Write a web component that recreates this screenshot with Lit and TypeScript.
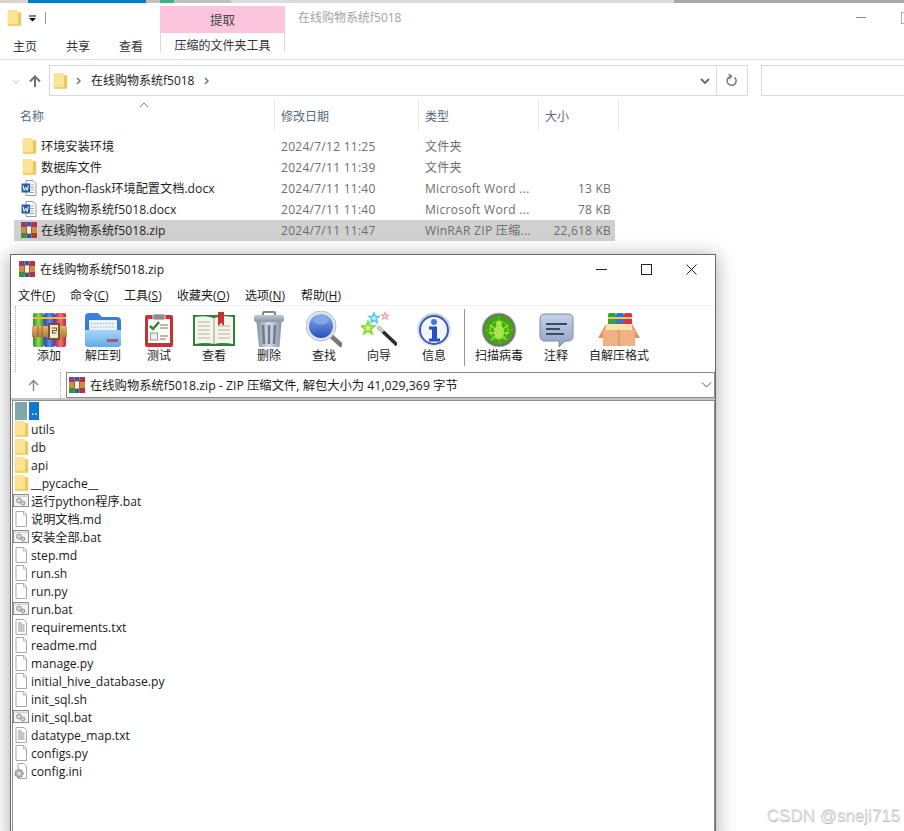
import { LitElement, html, css, svg } from "lit";
import { customElement } from "lit/decorators.js";

// small file-type icons, 16x16 viewBox
const folderIcon = html`<svg width="16" height="16" viewBox="0 0 16 16">
  <path d="M2 .5h9l1 2h3v13H2z" fill="#fde392" stroke="#ecd282" stroke-width=".5"/>
  <path d="M12 2.500h3v13H2v-1.200h10z" fill="#efc75e"/>
</svg>`;

const wordIcon = html`<svg width="16" height="16" viewBox="0 0 16 16">
  <path d="M5 .5h7l3 3v12H5z" fill="#fff" stroke="#8d9bb0"/>
  <path d="M9 5h4M9 7.500h4M9 10h4M9 12.500h4" stroke="#9aa7ba"/>
  <rect x="0.500" y="3.500" width="8.500" height="9" fill="#2a5ca8"/>
  <path d="M2 5.500l1.200 5 1.500-3.500 1.500 3.500 1.200-5" fill="none" stroke="#fff"/>
</svg>`;

const rarIcon = html`<svg width="16" height="16" viewBox="0 0 16 16">
  <rect x="0" y="0" width="5.500" height="6" fill="#9b3a78"/>
  <rect x="5.500" y="0" width="5" height="6" fill="#3b56b0"/>
  <rect x="10.500" y="0" width="5.500" height="6" fill="#c22a4d"/>
  <rect x="0" y="10" width="5.500" height="6" fill="#3f8f3c"/>
  <rect x="5.500" y="10" width="5" height="6" fill="#2f5f9a"/>
  <rect x="10.500" y="10" width="5.500" height="6" fill="#b7333c"/>
  <rect x="0" y="5" width="16" height="6" fill="#c98f45"/>
  <rect x="5.500" y="4" width="5" height="8" fill="#f6f0e2" stroke="#7a5326" stroke-width=".8"/>
</svg>`;

const pageIcon = html`<svg width="16" height="16" viewBox="0 0 16 16">
  <path d="M3 .5h8l2.500 3v12H3z" fill="#fff" stroke="#a8a8a8"/>
  <path d="M10.500 .5v3.500h3" fill="#f2f2f2" stroke="#b8b8b8"/>
</svg>`;

const textIcon = html`<svg width="16" height="16" viewBox="0 0 16 16">
  <path d="M3 .5h8l2.500 3v12H3z" fill="#fff" stroke="#a8a8a8"/>
  <path d="M5 4h4M5 6h6.500M5 8h6.500M5 10h6.500M5 12h6.500" stroke="#8c8c8c"/>
</svg>`;

const batIcon = html`<svg width="16" height="16" viewBox="0 0 16 16">
  <rect x="0.500" y="1.500" width="15" height="12" fill="#f4f4f4" stroke="#8c8c8c"/>
  <rect x="1.500" y="2.500" width="13" height="1.500" fill="#cfd3d8"/>
  <circle cx="6" cy="7.500" r="2.500" fill="#d5d5d5" stroke="#8a8a8a" stroke-width=".9"/>
  <circle cx="10" cy="10" r="2" fill="#d5d5d5" stroke="#8a8a8a" stroke-width=".9"/>
</svg>`;

const iniIcon = html`<svg width="16" height="16" viewBox="0 0 16 16">
  <path d="M5 .5h6l2.500 3v12H5z" fill="#fff" stroke="#a8a8a8"/>
  <circle cx="6" cy="10.500" r="3.800" fill="#bdbdbd" stroke="#7d7d7d" stroke-dasharray="1.400 .8" stroke-width="1.400"/>
  <circle cx="6" cy="10.500" r="1.300" fill="#eee"/>
</svg>`;

const parentIcon = html`<svg width="16" height="18" viewBox="0 0 16 18"><rect x="2" y="0" width="12" height="18" fill="#7ea8ad"/></svg>`;

const STAR = "M0-1L.28-.34 1-.3.44.14.62.85 0 .46-.62.85-.44.14-1-.3-.28-.34z";

// three-stop horizontal gradient, used for the book spines and other round shapes
const hGrad = (id: string, a: string, b: string) => svg`
  <linearGradient id=${id}><stop offset="0" stop-color=${a}/><stop offset=".5" stop-color=${b}/><stop offset="1" stop-color=${a}/></linearGradient>`;
const vGrad = (id: string, a: string, b: string) => svg`
  <linearGradient id=${id} x2="0" y2="1"><stop offset="0" stop-color=${a}/><stop offset="1" stop-color=${b}/></linearGradient>`;

// toolbar artwork, 36px tall
const toolbarArt: Record<string, unknown> = {
  add: svg`
    <defs>${hGrad("bg", "#2c8f2c", "#8fd65a")}${hGrad("bb", "#2b45b0", "#5f8ae8")}${hGrad("br", "#c32443", "#f0707f")}${vGrad("st", "#e3b56a", "#b07c38")}</defs>
    <rect x="2" y="2" width="11" height="34" rx="2" fill="url(#bg)"/>
    <rect x="13" y="2" width="11" height="34" rx="2" fill="url(#bb)"/>
    <rect x="24" y="2" width="11" height="34" rx="2" fill="url(#br)"/>
    <path d="M2 7h33" stroke="#e2bd4c" stroke-width="2"/>
    <rect x="1" y="15" width="35" height="11" fill="url(#st)"/>
    <path d="M7 15v11M11 15v11" stroke="#8f6427"/>
    <rect x="18" y="13" width="10" height="15" fill="#f6eedb" stroke="#7a5326" stroke-width="2"/>
    <path d="M20.500 17h5v2.500h-4v2.500h4" fill="none" stroke="#7a5326" stroke-width="1.200"/>`,
  extract: svg`
    <defs>${vGrad("fb", "#3a84dc", "#2f6fc8")}${vGrad("ff", "#a9d6f8", "#62aaec")}</defs>
    <path d="M0 6q0-4 4-4h9l4 4h15q4 0 4 4v22q0 4-4 4H4q-4 0-4-4z" fill="url(#fb)"/>
    <path d="M4 9h28v12H4z" fill="#eaf2fb"/>
    <path d="M6 12.500h24M6 16h24" stroke="#9db6d4" stroke-dasharray="1.500 1.500"/>
    <path d="M0 19h36v13q0 4-4 4H4q-4 0-4-4z" fill="url(#ff)"/>
    <rect x="22" y="28" width="11" height="3" fill="#cf4f48"/>`,
  test: svg`
    <rect x="4" y="4" width="28" height="32" rx="2" fill="#c23434"/>
    <rect x="7" y="8" width="22" height="24" fill="#fbfbf6"/>
    <rect x="12" y="3" width="12" height="6" rx="1.500" fill="#8d8d8d" stroke="#e8e8e8"/>
    <path d="M9 15l3 3 6-7" fill="none" stroke="#2e8a32" stroke-width="2.500"/>
    <path d="M19 14h8M19 17h8M19 25h8M19 28h6" stroke="#777"/>
    <rect x="9.500" y="22" width="7" height="7" fill="#eee" stroke="#999"/>`,
  view: svg`
    <rect x="0" y="4" width="42" height="31" fill="#2e7f3c"/>
    <path d="M2 6q11-2 19 1q8-3 19-1v27q-11-2-19 0q-8-2-19 0z" fill="#f7f5ea"/>
    <path d="M21 7v26" stroke="#999"/>
    <path d="M5 11h12M5 15h12M5 19h12M5 23h12M5 27h12M25 15h12M25 19h12M25 23h12M25 27h12" stroke="#b5b5ab"/>
    <path d="M25 1h6v14l-3-3-3 3z" fill="#c3342f"/>`,
  delete: svg`
    <defs>${hGrad("tc", "#8492a3", "#d8dfe8")}${vGrad("tl", "#c2ccd8", "#8794a5")}</defs>
    <rect x="12" y="1" width="12" height="5" rx="1" fill="none" stroke="#7c8794" stroke-width="2"/>
    <rect x="3" y="4" width="30" height="7" rx="2" fill="url(#tl)"/>
    <path d="M5.500 11h25l-2 25H8z" fill="url(#tc)"/>
    <path d="M12 14l1 19M18 14v19M24 14l-1 19" stroke="#6f7c8c" stroke-width="2.500"/>`,
  find: svg`
    <defs>${vGrad("lens", "#8eaeea", "#2450b8")}</defs>
    <path d="M25 25l10 9" stroke="#7a7a7a" stroke-width="4.500" stroke-linecap="round"/>
    <circle cx="15" cy="15" r="15" fill="#dfe6ee" stroke="#b5bfca"/>
    <circle cx="15" cy="15" r="12" fill="url(#lens)"/>
    <ellipse cx="15" cy="9.500" rx="7.500" ry="4" fill="#86a8e8"/>`,
  wizard: svg`
    <path d="M17 16l19 18" stroke="#2c2c2c" stroke-width="3.500"/>
    <path d="M17 16l5 4.700" stroke="#cfcfcf" stroke-width="3.500"/>
    <path d=${STAR} transform="translate(7 17) scale(6.500)" fill="#d5f5a0" stroke="#8ddc3c" stroke-width=".3"/>
    <path d=${STAR} transform="translate(13 7) scale(5)" fill="#c8f2fa" stroke="#45cde8" stroke-width=".3"/>
    <path d=${STAR} transform="translate(24 5) scale(3.500)" fill="#fbdcde" stroke="#ef9aa0" stroke-width=".3"/>`,
  info: svg`
    <defs>${vGrad("ib", "#c8ced9", "#eef1f6")}</defs>
    <circle cx="18" cy="19" r="17" fill="url(#ib)"/>
    <circle cx="18" cy="19" r="14" fill="#f2f5fb" stroke="#3c58c0" stroke-width="2"/>
    <circle cx="18" cy="11" r="3" fill="#3c7ad8"/>
    <path d="M13 15.500h8v12h3v3H13v-3h3v-9h-3z" fill="#2b4fc0"/>`,
  scan: svg`
    <circle cx="18" cy="19" r="17" fill="#6d7470" stroke="#c2c8c4"/>
    <circle cx="18" cy="19" r="14.500" fill="#43a80e"/>
    <circle cx="18" cy="19" r="9" fill="none" stroke="#8ade3e"/>
    <path d="M18 5v28M4 19h28" stroke="#7acb32" stroke-width=".7"/>
    <ellipse cx="18" cy="21" rx="5" ry="7" fill="#a5e84e"/>
    <circle cx="18" cy="13" r="3" fill="#a5e84e"/>
    <path d="M9 14l5 4M27 14l-5 4M8 22h6M28 22h-6M10 29l5-4M26 29l-5-4" stroke="#a5e84e" stroke-width="1.300"/>`,
  comment: svg`
    <defs>${vGrad("cm", "#c6d2e6", "#8ea2c4")}</defs>
    <path d="M7 3h23q5 0 5 5v17q0 5-5 5h-3l-6 6v-6H7q-5 0-5-5V8q0-5 5-5z" fill="url(#cm)" stroke="#7a8ba8"/>
    <path d="M8 13h21M8 18h14M8 23h18" stroke="#3c4a60" stroke-width="2"/>`,
  sfx: svg`
    <rect x="10" y="2" width="8" height="15" rx="1.500" fill="#2fa544"/>
    <rect x="18" y="2" width="8" height="15" rx="1.500" fill="#3a6fd0"/>
    <rect x="26" y="2" width="8" height="15" rx="1.500" fill="#dd2f4e"/>
    <path d="M10 7h24" stroke="#e4cf66" stroke-width="2"/>
    <path d="M8 13h27v2l-5 8H8z" fill="#f9e3ab"/>
    <path d="M8 13L0 27h7zM34 13l8 14h-7z" fill="#dd9364"/>
    <rect x="5" y="19" width="32" height="16" fill="#f2b183"/>
    <path d="M21 19v16" stroke="#c98a5e"/>`,
};

const art = (key: string, width = 36) =>
  html`<svg width=${width} height="36" viewBox="0 0 ${width} 36">${toolbarArt[key]}</svg>`;

const explorerRows = [
  { icon: folderIcon, name: "环境安装环境", date: "2024/7/12 11:25", type: "文件夹", size: "" },
  { icon: folderIcon, name: "数据库文件", date: "2024/7/11 11:39", type: "文件夹", size: "" },
  { icon: wordIcon, name: "python-flask环境配置文档.docx", date: "2024/7/11 11:40", type: "Microsoft Word ...", size: "13 KB" },
  { icon: wordIcon, name: "在线购物系统f5018.docx", date: "2024/7/11 11:40", type: "Microsoft Word ...", size: "78 KB" },
  { icon: rarIcon, name: "在线购物系统f5018.zip", date: "2024/7/11 11:47", type: "WinRAR ZIP 压缩...", size: "22,618 KB", selected: true },
];

const tools = [
  { key: "add", label: "添加", w: 54 },
  { key: "extract", label: "解压到", w: 54 },
  { key: "test", label: "测试", w: 58 },
  { key: "view", label: "查看", w: 52, art: 42 },
  { key: "delete", label: "删除", w: 58 },
  { key: "find", label: "查找", w: 52 },
  { key: "wizard", label: "向导", w: 58 },
  { key: "info", label: "信息", w: 52 },
];

const tools2 = [
  { key: "scan", label: "扫描病毒", w: 54 },
  { key: "comment", label: "注释", w: 60 },
  { key: "sfx", label: "自解压格式", w: 66, art: 42 },
];

const menu = [
  ["文件(", "F", ")"],
  ["命令(", "C", ")"],
  ["工具(", "S", ")"],
  ["收藏夹(", "O", ")"],
  ["选项(", "N", ")"],
  ["帮助(", "H", ")"],
];

const archiveRows: [unknown, string][] = [
  [folderIcon, "utils"],
  [folderIcon, "db"],
  [folderIcon, "api"],
  [folderIcon, "__pycache__"],
  [batIcon, "运行python程序.bat"],
  [pageIcon, "说明文档.md"],
  [batIcon, "安装全部.bat"],
  [pageIcon, "step.md"],
  [pageIcon, "run.sh"],
  [pageIcon, "run.py"],
  [batIcon, "run.bat"],
  [textIcon, "requirements.txt"],
  [pageIcon, "readme.md"],
  [pageIcon, "manage.py"],
  [pageIcon, "initial_hive_database.py"],
  [pageIcon, "init_sql.sh"],
  [batIcon, "init_sql.bat"],
  [textIcon, "datatype_map.txt"],
  [pageIcon, "configs.py"],
  [iniIcon, "config.ini"],
];

@customElement("app-root")
export class AppRoot extends LitElement {
  static styles = css`
    :host {
      display: block;
      position: relative;
      width: 904px;
      height: 831px;
      overflow: hidden;
      background: #fff;
      color: #1a1a1a;
      font-family: "Open Sans", "Noto Sans CJK SC", sans-serif;
      font-size: 12px;
    }

    svg {
      display: block;
      flex: none;
    }

    /* desktop strip above the explorer */
    .strip {
      display: flex;
      height: 3px;
    }
    .strip span {
      display: block;
    }
    .s1 { width: 28px; background: #d8d4cc; }
    .s2 { width: 118px; background: #0b78c2; }
    .s3 { width: 14px; background: #c4c0bc; }
    .s3b { width: 14px; background: #3fb27f; }
    .s3c { width: 57px; background: #c4c0bc; }
    .s4 { width: 443px; background: #dcdcdc; }
    .s5 { flex: 1; background: #a8a8a8; }

    .title-bar {
      display: flex;
      height: 30px;
      align-items: flex-end;
    }
    .quick {
      display: flex;
      align-items: center;
      width: 160px;
      height: 30px;
      padding-left: 6px;
      box-sizing: border-box;
    }
    .dropdown {
      margin-left: 7px;
      width: 7px;
      height: 7px;
    }
    .bar-line {
      margin-left: 9px;
      width: 1px;
      height: 12px;
      background: #999;
    }
    .pink {
      width: 125px;
      height: 27px;
      background: #fdc5dd;
      display: flex;
      align-items: center;
      justify-content: center;
      font-size: 12.500px;
      color: #444;
    }
    .win-title {
      margin-left: 13px;
      height: 30px;
      line-height: 29px;
      color: #a3a3a3;
    }
    .win-min {
      position: absolute;
      left: 856px;
      top: 17px;
      width: 10px;
      height: 1px;
      background: #888;
    }
    .win-max {
      position: absolute;
      left: 901px;
      top: 12px;
      width: 10px;
      height: 10px;
      border: 1px solid #aaa;
    }

    .tabs {
      display: flex;
      height: 26px;
      border-bottom: 1px solid #dedede;
      align-items: center;
    }
    .tab {
      width: 53px;
      padding-left: 13px;
      box-sizing: border-box;
      color: #333;
    }
    .tab:nth-child(3) { width: 54px; margin-right: -13px; }
    .tool-tab {
      width: 125px;
      height: 19px;
      align-self: flex-start;
      margin-left: 13px;
      border: 1px solid #d9d9d9;
      border-width: 0 1px;
      box-sizing: border-box;
      text-align: center;
      line-height: 25px;
      color: #333;
    }

    .nav {
      display: flex;
      align-items: center;
      height: 31px;
      margin-top: 5px;
    }
    .nav-buttons {
      width: 49px;
      display: flex;
      align-items: center;
      padding-left: 11px;
      gap: 8px;
      box-sizing: border-box;
    }
    .address {
      width: 699px;
      height: 31px;
      box-sizing: border-box;
      border: 1px solid #d9d9d9;
      display: flex;
      align-items: center;
      padding-left: 2px;
      gap: 6px;
    }
    .address .path {
      margin: 0 2px 2px 1px;
    }
    .address .grow { flex: 1; }
    .address .refresh {
      width: 30px;
      height: 29px;
      border-left: 1px solid #d9d9d9;
      display: flex;
      align-items: center;
      justify-content: center;
    }
    .search {
      margin-left: 13px;
      flex: 1;
      height: 31px;
      box-sizing: border-box;
      border: 1px solid #d9d9d9;
      border-right: 0;
    }

    .columns {
      position: relative;
      display: grid;
      grid-template-columns: 275px 144px 120px 80px;
      height: 30px;
      margin-top: 4px;
      color: #566a80;
    }
    .columns > div {
      display: flex;
      align-items: center;
      padding: 2px 0 0 6px;
      border-right: 1px solid #e5e5e5;
    }
    .columns > div:first-child { padding-left: 20px; }
    .sort {
      position: absolute;
      left: 139px;
      top: 2px;
    }

    .rows {
      margin: 6px 0 0 14px;
      width: 601px;
    }
    .row {
      display: grid;
      grid-template-columns: 260px 144px 120px 73px;
      height: 21px;
      box-sizing: border-box;
      padding-bottom: 1px;
      align-items: center;
      color: #6d6d6d;
    }
    .row.selected { background: #d0d0d0; }
    .row .name {
      display: flex;
      align-items: center;
      gap: 4px;
      padding-left: 7px;
      color: #1f1f1f;
      white-space: nowrap;
      font-size: 12.200px;
      margin-right: -7px;
    }
    .row .date { padding-left: 7px; letter-spacing: 0.27px; }
    .row .type { padding-left: 7px; white-space: nowrap; letter-spacing: 0.3px; }
    .row .size { text-align: right; letter-spacing: 0.2px; }

    /* floating WinRAR window */
    .rar {
      position: absolute;
      left: 10px;
      top: 254px;
      width: 706px;
      height: 590px;
      box-sizing: border-box;
      background: #fff;
      border: 1px solid #6a6a6a;
      box-shadow: 0 2px 18px rgba(0, 0, 0, 0.35);
      display: flex;
      flex-direction: column;
    }
    .rar-title {
      display: flex;
      align-items: center;
      height: 30px;
      box-sizing: border-box;
      padding: 0 0 2px 8px;
      gap: 5px;
      flex: none;
      font-size: 12.150px;
    }
    .rar-title .grow { flex: 1; }
    .ctls { display: flex; padding-right: 1px; }
    .ctl {
      width: 45px;
      display: flex;
      justify-content: center;
    }
    .menu {
      display: flex;
      height: 20px;
      align-items: center;
      flex: none;
      border-bottom: 1px solid #f0f0f0;
    }
    .menu span {
      white-space: nowrap;
    }
    .menu .m0 { margin-left: 7px; width: 52px; }
    .menu .m1 { width: 54px; }
    .menu .m2 { width: 53px; }
    .menu .m3 { width: 68px; }
    .menu .m4 { width: 56px; }
    .menu u { text-underline-offset: 1px; }

    .toolbar {
      display: flex;
      height: 66px;
      flex: none;
      padding-left: 4px;
      box-sizing: border-box;
    }
    .grip {
      flex: none;
      width: 0;
      border-left: 1px dotted #aaa;
      margin-right: 6px;
    }
    .tool {
      display: flex;
      flex-direction: column;
      align-items: center;
      padding-top: 5px;
      gap: 2px;
      white-space: nowrap;
      line-height: 14px;
      box-sizing: border-box;
      color: #222;
    }
    .tool-sep {
      width: 1px;
      height: 57px;
      margin: 3px 7px 0 4px;
      background: #999;
    }

    .locate {
      display: flex;
      align-items: stretch;
      height: 26px;
      flex: none;
      border-bottom: 2px solid #c4c4c4;
    }
    .up {
      width: 49px;
      display: flex;
      align-items: center;
      justify-content: center;
      padding-right: 5px;
      box-sizing: border-box;
    }
    .locate .grip { margin-right: 5px; }
    .field {
      flex: 1;
      box-sizing: border-box;
      border: 1px solid #8a8a8a;
      display: flex;
      align-items: center;
      padding-left: 2px;
      gap: 5px;
      font-size: 12.300px;
    }
    .field span:first-of-type { padding-bottom: 1px; }
    .field .grow { flex: 1; }
    .field .chev { margin-right: 2px; }

    .list {
      flex: 1;
      margin: 0 0 0 1px;
      border: 1px solid #8e8e8e;
      padding-top: 1px;
    }
    .item {
      display: flex;
      align-items: center;
      height: 18px;
      gap: 2px;
      font-size: 12.150px;
      white-space: nowrap;
    }
    .item .current {
      background: #0a78d4;
      color: #fff;
      padding: 0 2px;
      line-height: 18px;
      margin-left: -2px;
      width: 6px;
    }

    .mark {
      position: absolute;
      right: 4px;
      bottom: 5px;
      font-family: "Liberation Sans", sans-serif;
      font-size: 17px;
      color: #e0e0e0;
      text-shadow: 0.5px 0.5px 0 #c0c0c0;
    }
  `;

  private smallChevron(d: string, stroke = "#777", sw = 1.500) {
    return html`<svg width="10" height="10" viewBox="0 0 10 10"><path d=${d} fill="none" stroke=${stroke} stroke-width=${sw}/></svg>`;
  }

  private renderExplorer() {
    return html`
      <div class="strip"><span class="s1"></span><span class="s2"></span><span class="s3"></span><span class="s3b"></span><span class="s3c"></span><span class="s4"></span><span class="s5"></span></div>
      <div class="title-bar">
        <div class="quick">
          ${folderIcon}
          <div class="dropdown">
            <svg width="7" height="7" viewBox="0 0 7 7"><path d="M0 1h7" stroke="#000"/><path d="M0 3l3.500 3.500L7 3z" fill="#000"/></svg>
          </div>
          <div class="bar-line"></div>
        </div>
        <div class="pink">提取</div>
        <div class="win-title">在线购物系统f5018</div>
      </div>
      <div class="win-min"></div>
      <div class="win-max"></div>
      <div class="tabs">
        <div class="tab">主页</div>
        <div class="tab">共享</div>
        <div class="tab">查看</div>
        <div class="tool-tab">压缩的文件夹工具</div>
      </div>
      <div class="nav">
        <div class="nav-buttons">
          ${this.smallChevron("M2 4l3 3 3-3", "#ddd")}
          <svg width="12" height="12" viewBox="0 0 12 12"><path d="M6 12V2M1 6.500L6 1.500l5 5" fill="none" stroke="#707070" stroke-width="2"/></svg>
        </div>
        <div class="address">
          ${folderIcon}
          ${this.smallChevron("M3 2l3 3-3 3", "#777")}
          <span class="path">在线购物系统f5018</span>
          ${this.smallChevron("M3 2l3 3-3 3", "#777")}
          <span class="grow"></span>
          ${this.smallChevron("M1 3l4 4 4-4", "#666", 1.800)}
          <div class="refresh">
            <svg width="12" height="13" viewBox="0 0 12 13"><path d="M8.500 3.400A4.500 4.500 0 1 1 3 3.200L5 2" fill="none" stroke="#777" stroke-width="1.500"/><path d="M2.500 0l3 2-2 3" fill="none" stroke="#777" stroke-width="1.300"/></svg>
          </div>
        </div>
        <div class="search"></div>
      </div>
      <div class="columns">
        <div>名称</div>
        <div>修改日期</div>
        <div>类型</div>
        <div>大小</div>
        <svg class="sort" width="10" height="6" viewBox="0 0 10 6"><path d="M1 5l4-4 4 4" fill="none" stroke="#777"/></svg>
      </div>
      <div class="rows">
        ${explorerRows.map(
          (r) => html`<div class="row ${r.selected ? "selected" : ""}">
            <div class="name">${r.icon}<span>${r.name}</span></div>
            <div class="date">${r.date}</div>
            <div class="type">${r.type}</div>
            <div class="size">${r.size}</div>
          </div>`
        )}
      </div>
    `;
  }

  private renderTool(t: { key: string; label: string; w: number; art?: number }) {
    return html`<div class="tool" style="width:${t.w}px">${art(t.key, t.art ?? 36)}<span>${t.label}</span></div>`;
  }

  private renderRar() {
    return html`
      <div class="rar">
        <div class="rar-title">
          ${rarIcon}
          <span>在线购物系统f5018.zip</span>
          <span class="grow"></span>
          <div class="ctls">
            <div class="ctl"><svg width="11" height="11" viewBox="0 0 11 11"><path d="M0 5.500h11" stroke="#222"/></svg></div>
            <div class="ctl"><svg width="11" height="11" viewBox="0 0 11 11"><rect x=".5" y=".5" width="10" height="10" fill="none" stroke="#222"/></svg></div>
            <div class="ctl"><svg width="11" height="11" viewBox="0 0 11 11"><path d="M.5.500l10 10M10.500.500l-10 10" stroke="#222"/></svg></div>
          </div>
        </div>
        <div class="menu">
          ${menu.map(
            (m, i) => html`<span class="m${i}">${m[0]}<u>${m[1]}</u>${m[2]}</span>`
          )}
        </div>
        <div class="toolbar">
          <div class="grip"></div>
          ${tools.map((t) => this.renderTool(t))}
          <div class="tool-sep"></div>
          ${tools2.map((t) => this.renderTool(t))}
        </div>
        <div class="locate">
          <div class="up">
            <svg width="11" height="12" viewBox="0 0 11 12"><path d="M5.500 12V1.500M1 6l4.500-4.500L10 6" fill="none" stroke="#8a8a8a" stroke-width="1.500"/></svg>
          </div>
          <div class="grip"></div>
          <div class="field">
            ${rarIcon}
            <span>在线购物系统f5018.zip - ZIP 压缩文件, 解包大小为 41,029,369 字节</span>
            <span class="grow"></span>
            <svg class="chev" width="11" height="8" viewBox="0 0 11 8"><path d="M1 1.500l4.500 4.500L10 1.500" fill="none" stroke="#555"/></svg>
          </div>
        </div>
        <div class="list">
          <div class="item">${parentIcon}<span class="current">..</span></div>
          ${archiveRows.map(
            ([icon, name]) => html`<div class="item">${icon}<span>${name}</span></div>`
          )}
        </div>
      </div>
    `;
  }

  render() {
    return html`
      ${this.renderExplorer()}
      ${this.renderRar()}
      <div class="mark">CSDN @sneji715</div>
    `;
  }
}
